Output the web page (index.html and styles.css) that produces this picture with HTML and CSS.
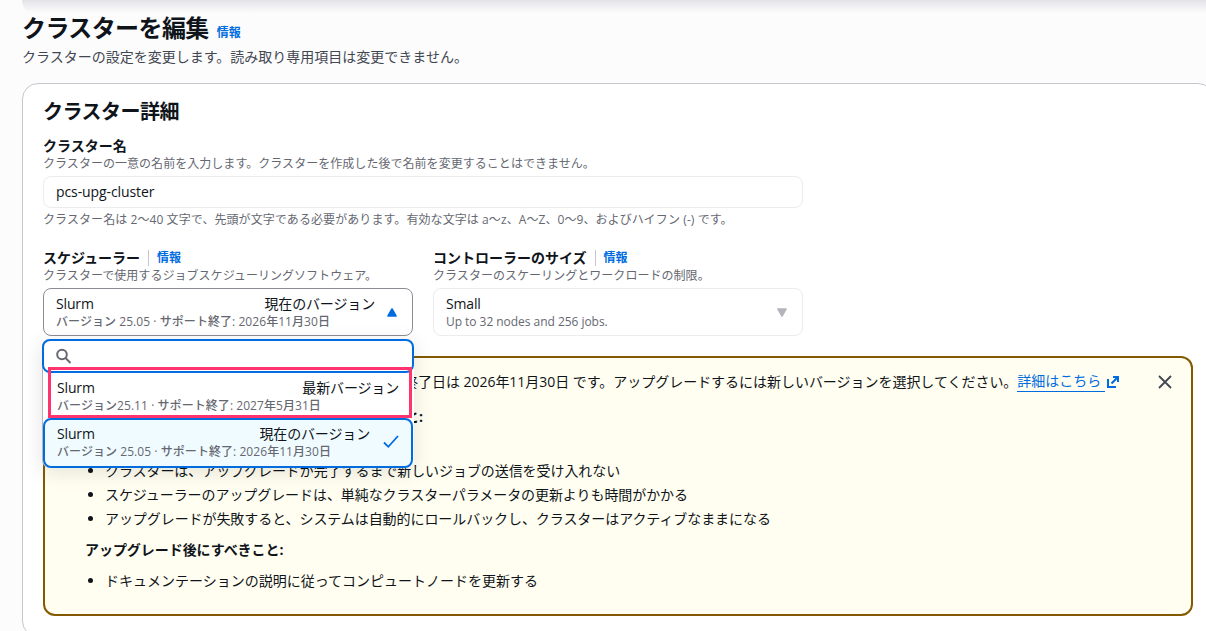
FILE: index.html
```html
<!DOCTYPE html>
<html lang="ja">
<head>
  <meta charset="UTF-8" />
  <meta name="viewport" content="width=device-width, initial-scale=1.0"/>
  <title>クラスターを編集</title>
  <link rel="stylesheet" href="styles.css">
</head>
<body>

<div class="top-shadow"></div>

<main class="page">
  <header class="page-header">
    <div class="title-row">
      <h1>クラスターを編集</h1>
      <a class="info">情報</a>
    </div>
    <p>クラスターの設定を変更します。読み取り専用項目は変更できません。</p>
  </header>

  <section class="card">
    <h2>クラスター詳細</h2>

    <div class="field name-field">
      <div class="label">クラスター名</div>
      <div class="hint">クラスターの一意の名前を入力します。クラスターを作成した後で名前を変更することはできません。</div>
      <div class="input">pcs-upg-cluster</div>
      <div class="hint constraint">クラスター名は 2〜40 文字で、先頭が文字である必要があります。有効な文字は a〜z、A〜Z、0〜9、およびハイフン (-) です。</div>
    </div>

    <div class="columns">
      <div class="field">
        <div class="label">スケジューラー <a class="info divided">情報</a></div>
        <div class="hint">クラスターで使用するジョブスケジューリングソフトウェア。</div>
        <div class="select open">
          <div class="option-text">
            <div class="option-title"><span>Slurm</span><span>現在のバージョン</span></div>
            <div class="option-desc">バージョン 25.05 · サポート終了: 2026年11月30日</div>
          </div>
          <svg class="caret" width="10" height="9" viewBox="0 0 10 9"><path d="M5 1 9 8H1z" fill="#006ce0" stroke="#006ce0" stroke-width="1.6" stroke-linejoin="round"/></svg>
        </div>

        <!-- Scheduler version dropdown -->
        <div class="dropdown">
          <div class="search">
            <svg width="16" height="16" viewBox="0 0 16 16" fill="none" stroke="#656871" stroke-width="2"><circle cx="6" cy="6.5" r="4.8"/><path d="m9.5 10 5 5"/></svg>
          </div>
          <div class="option">
            <div class="option-text">
              <div class="option-title"><span>Slurm</span><span>最新バージョン</span></div>
              <div class="option-desc">バージョン25.11 · サポート終了: 2027年5月31日</div>
            </div>
          </div>
          <div class="option selected">
            <div class="option-text">
              <div class="option-title"><span>Slurm</span><span>現在のバージョン</span></div>
              <div class="option-desc">バージョン 25.05 · サポート終了: 2026年11月30日</div>
            </div>
            <svg class="check" width="16" height="16" viewBox="0 0 16 16" fill="none" stroke="#006ce0" stroke-width="1.8"><path d="m1 8.5 4.3 4.3L15 2"/></svg>
          </div>
          <div class="highlight"></div>
        </div>
      </div>

      <div class="field">
        <div class="label">コントローラーのサイズ <a class="info divided">情報</a></div>
        <div class="hint">クラスターのスケーリングとワークロードの制限。</div>
        <div class="select readonly">
          <div class="option-text">
            <div class="option-title"><span>Small</span></div>
            <div class="option-desc">Up to 32 nodes and 256 jobs.</div>
          </div>
          <svg class="caret" width="10" height="9" viewBox="0 0 10 9"><path d="M5 8 1 1h8z" fill="#b4b4bb" stroke="#b4b4bb" stroke-width="1.6" stroke-linejoin="round"/></svg>
        </div>
      </div>
    </div>

    <div class="alert">
      <div class="alert-body">
        <p class="alert-lead"><span>終了日は 2026年11月30日 です。アップグレードするには新しいバージョンを選択してください。</span><a class="more">詳細はこちら </a><svg class="external" width="14" height="14" viewBox="0 0 14 14" fill="none" stroke="#006ce0" stroke-width="2"><path d="M2 4v8h8M7 2h5v5M12 2 5.5 8.5"/></svg></p>
        <p class="alert-heading first">と:</p>
        <ul class="before">
          <li>クラスターは、アップグレードが完了するまで新しいジョブの送信を受け入れない</li>
          <li>スケジューラーのアップグレードは、単純なクラスターパラメータの更新よりも時間がかかる</li>
          <li>アップグレードが失敗すると、システムは自動的にロールバックし、クラスターはアクティブなままになる</li>
        </ul>
        <p class="alert-heading">アップグレード後にすべきこと:</p>
        <ul class="after">
          <li>ドキュメンテーションの説明に従ってコンピュートノードを更新する</li>
        </ul>
      </div>
      <svg class="close" width="14" height="14" viewBox="0 0 14 14" fill="none" stroke="#424650" stroke-width="1.8"><path d="m1 1 12 12M13 1 1 13"/></svg>
    </div>
  </section>
</main>

</body>
</html>
```
FILE: styles.css
```css
:root {
  --text: #0f141a;
  --muted: #656871;
  --blue: #006ce0;
  --line: #ebebf0;
}

* {
  box-sizing: border-box;
}

body {
  font-family: "Open Sans", "Noto Sans CJK JP", sans-serif;
  font-size: 14px;
  line-height: 20px;
  margin: 0;
  height: 631px;
  overflow: hidden;
  background-color: #fcfcfd;
  color: var(--text);
}

h1, h2, p, ul {
  margin: 0;
}

/* shadow of the bar above the page */
.top-shadow {
  height: 13px;
  margin-left: 22px;
  margin-bottom: -13px;
  background: linear-gradient(#e4e4e8, #ebebee 30%, #fcfcfd);
  border-bottom-left-radius: 12px;
}

.page {
  height: 631px;
  padding: 13px 0 0 22px;
  overflow: hidden;
}

.page-header {
  height: 70px;
}

.title-row {
  display: flex;
  align-items: baseline;
  gap: 8px;
}

h1 {
  font-size: 24px;
  line-height: 30px;
  letter-spacing: -0.6px;
}

.page-header p {
  margin-top: 4px;
  color: #424650;
}

.info {
  color: var(--blue);
  font-size: 12px;
  font-weight: 700;
}

.card {
  width: 1192px;
  height: 554px;
  padding: 16px 20px;
  background-color: #fff;
  border: 1px solid #c6c6cd;
  border-radius: 16px;
}

h2 {
  font-size: 20px;
  line-height: 24px;
  letter-spacing: -0.5px;
}

.field {
  position: relative;
}

.name-field {
  width: 760px;
  margin-top: 12px;
}

.label {
  display: flex;
  align-items: center;
  font-weight: 700;
  height: 20px;
}

.hint {
  color: var(--muted);
  font-size: 12px;
  line-height: 16px;
  letter-spacing: 0.04px;
  white-space: nowrap;
}

.input {
  height: 32px;
  margin-top: 4px;
  padding: 5px 12px;
  border: 1px solid var(--line);
  border-radius: 8px;
  font-weight: 500;
  letter-spacing: -0.1px;
}

.constraint {
  margin-top: 4px;
  letter-spacing: 0.08px;
}

.columns {
  display: grid;
  grid-template-columns: 370px 370px;
  gap: 20px;
  margin-top: 20px;
}

.divided {
  margin-left: 8px;
  padding-left: 8px;
  line-height: 16px;
  border-left: 1px solid #c6c6cd;
}

.select {
  display: flex;
  align-items: center;
  height: 48px;
  margin-top: 4px;
  padding: 0 15px 0 12px;
  border: 1px solid #8c8c94;
  border-radius: 8px;
}

.select.readonly {
  border-color: var(--line);
}

.caret {
  margin-left: 12px;
}

.option-text {
  flex: 1;
}

.option-title {
  display: flex;
  justify-content: space-between;
  line-height: 20px;
  font-weight: 500;
  letter-spacing: -0.15px;
}

.option-title span + span {
  font-weight: 400;
}

.option-desc {
  color: var(--muted);
  font-size: 12px;
  line-height: 16px;
  font-weight: 500;
  letter-spacing: 0.06px;
}

.readonly .option-desc {
  letter-spacing: -0.04px;
}

.dropdown {
  position: absolute;
  z-index: 2;
  top: 91px;
  left: -1px;
  width: 372px;
  height: 129px;
  background-color: #fff;
  border-left: 1px solid #b4b4bb;
  border-radius: 8px;
  box-shadow: 0 4px 20px 1px rgba(0, 7, 22, 0.1);
}

.search {
  height: 34px;
  margin-left: -1px;
  padding: 7px 12px;
  border: 2px solid var(--blue);
  border-radius: 8px;
}

.option {
  display: flex;
  align-items: center;
  height: 45px;
  padding: 1px 15px 0 14px;
}

.option.selected {
  height: 50px;
  padding: 0 12px 2px;
  background-color: #f0fbff;
  border: 2px solid var(--blue);
  border-radius: 8px;
  margin-right: 1px;
}

.check {
  margin-left: 13px;
}

/* marks the newest version */
.highlight {
  position: absolute;
  top: 28px;
  left: 5px;
  width: 364px;
  height: 51px;
  border: 3px solid #ff336e;
}

.alert {
  display: flex;
  height: 260px;
  margin-top: 20px;
  padding: 13px 19px 0 40px;
  background-color: #fffef0;
  border: 2px solid #855900;
  border-radius: 12px;
}

.alert-body {
  flex: 1;
}

.alert-lead {
  display: flex;
  align-items: center;
  padding-left: 319px;
  line-height: 20px;
  letter-spacing: -0.03px;
  white-space: nowrap;
}

.more {
  color: var(--blue);
  border-bottom: 1px solid var(--blue);
  white-space: pre;
}

.external {
  margin-left: 1px;
}

.alert-heading {
  margin-top: 7px;
  line-height: 24px;
  font-weight: 700;
  letter-spacing: -0.05px;
}

.alert-heading.first {
  margin-top: 13px;
  padding-left: 320px;
}

.alert ul {
  margin-top: 7px;
  padding-left: 20px;
  line-height: 24px;
  letter-spacing: -0.07px;
}

.alert ul.before {
  margin-top: 30px;
}

.alert ul.after {
  letter-spacing: 0;
}

.close {
  margin-top: 4px;
}
```
